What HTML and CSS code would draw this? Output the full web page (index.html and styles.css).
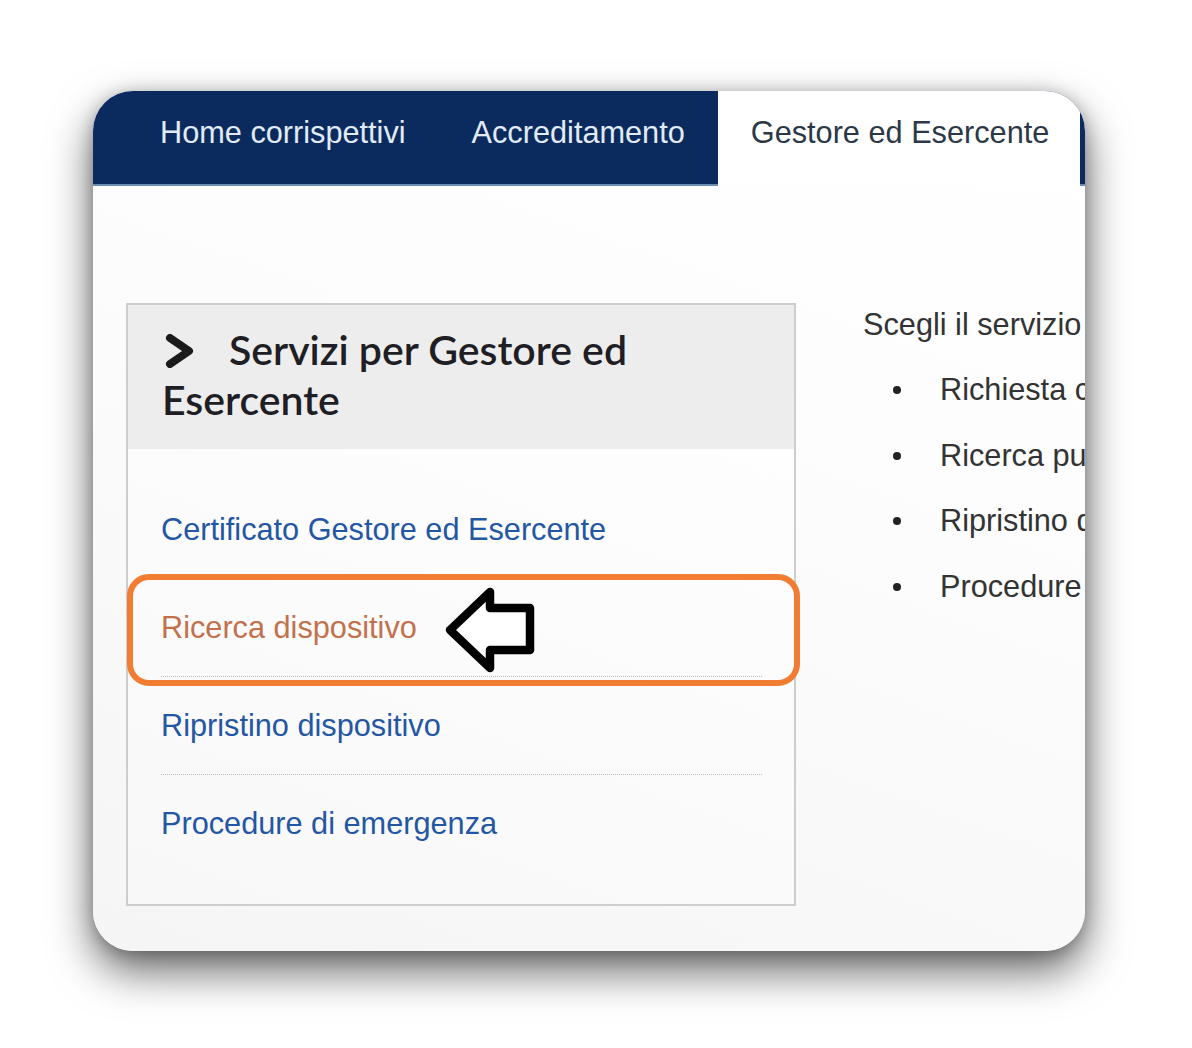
FILE: index.html
```html
<!DOCTYPE html>
<html lang="it">
<head>
<meta charset="utf-8">
<title>Gestore ed Esercente</title>
<link rel="stylesheet" href="styles.css">
</head>
<body>
<div class="stage">
  <div class="card">
    <nav class="nav">
      <a class="tab">Home corrispettivi</a>
      <a class="tab">Accreditamento</a>
      <a class="tab tab-active">Gestore ed Esercente</a>
      <a class="tab">Consultazione</a>
    </nav>
    <div class="content">
      <section class="panel">
        <h2 class="panel-title">
          <svg class="chevron" viewBox="0 0 30 34" aria-hidden="true"><polyline points="5,4 24,17 5,30" fill="none" stroke="#1b1b1b" stroke-width="8" stroke-linecap="round" stroke-linejoin="round"/></svg>Servizi per Gestore ed Esercente
        </h2>
        <ul class="links">
          <li class="link-item"><a class="link">Certificato Gestore ed Esercente</a></li>
          <li class="link-item"><a class="link link-hover">Ricerca dispositivo</a></li>
          <li class="link-item"><a class="link">Ripristino dispositivo</a></li>
          <li class="link-item"><a class="link">Procedure di emergenza</a></li>
        </ul>
        <div class="highlight"></div>
        <svg class="arrow" viewBox="0 0 90 88" aria-hidden="true"><polygon points="5,44 45,6 45,22 85,22 85,64 45,64 45,82" fill="#fff" stroke="#000" stroke-width="8.5" stroke-linejoin="round"/></svg>
      </section>
      <div class="intro">
        <p class="intro-text">Scegli il servizio di interesse</p>
        <ul class="services">
          <li class="service">Richiesta certificato</li>
          <li class="service">Ricerca punto vendita</li>
          <li class="service">Ripristino dispositivo</li>
          <li class="service">Procedure di emergenza</li>
        </ul>
      </div>
    </div>
  </div>
</div>
</body>
</html>
```

FILE: styles.css
```css
* { box-sizing: border-box; }
html, body { margin: 0; padding: 0; background: #fff; }
body { font-family: "Liberation Sans", Arial, sans-serif; }

.stage {
  padding: 91px 0 97px 93px;
  min-height: 1048px;
}

.card {
  width: 992px;
  height: 860px;
  border-radius: 40px;
  overflow: hidden;
  background: linear-gradient(200deg, #ffffff 0%, #fdfdfd 35%, #f5f5f5 100%);
  box-shadow: 0 20px 44px rgba(0, 0, 0, 0.6), 0 2px 16px rgba(0, 0, 0, 0.24);
}

.nav {
  display: flex;
  flex-wrap: nowrap;
  height: 95px;
  padding-left: 34px;
  background: #0b2b5f;
  box-shadow: inset 0 -2px 0 #6b8db2;
  white-space: nowrap;
}

.tab {
  flex-shrink: 0;
  height: 93px;
  padding: 24px 33px 0;
  font-size: 30.7px;
  line-height: 36px;
  color: #e2ebf5;
}

.tab-active {
  height: 95px;
  background: #fff;
  color: #2c3848;
  width: 362px;
}

.content {
  display: flex;
  align-items: flex-start;
  gap: 67px;
  padding: 106px 0 0 33px;
  white-space: nowrap;
}

.panel {
  position: relative;
  flex-shrink: 0;
  width: 670px;
  margin-top: 11px;
  border: 2px solid #cdcdcd;
  background: linear-gradient(200deg, #ffffff 0%, #f8f8f8 100%);
}

.panel-title {
  margin: 0;
  padding: 20px 34px 24px;
  background: #ededed;
  font-family: "Lato", "Liberation Sans", sans-serif;
  font-weight: 600;
  font-size: 41px;
  line-height: 50px;
  color: #1e1e24;
  white-space: normal;
}

.chevron {
  display: inline-block;
  width: 30px;
  height: 34px;
  margin: 0 34px 0 3px;
  vertical-align: -3px;
}

.links {
  list-style: none;
  margin: 0;
  padding: 32px 32px 32px 33px;
}

.link-item {
  height: 98px;
  line-height: 97px;
  border-bottom: 1px dotted #b9b9b9;
}

.link-item:last-child {
  border-bottom: none;
  height: 97px;
}

.link {
  font-size: 30.7px;
  color: #2457a3;
}

.link-hover {
  color: #c2714d;
}

.highlight {
  position: absolute;
  left: -1px;
  top: 269px;
  width: 673px;
  height: 112px;
  border: 6px solid #f07d32;
  border-radius: 22px;
}

.arrow {
  position: absolute;
  left: 317px;
  top: 281px;
  width: 90px;
  height: 88px;
}

.intro {
  flex-shrink: 0;
  color: #333;
  font-size: 30.7px;
}

.intro-text {
  margin: 0;
  line-height: 65.5px;
}

.services {
  list-style: none;
  margin: 0;
  padding: 0;
}

.service {
  display: flex;
  align-items: center;
  height: 65.5px;
}

.service::before {
  content: "";
  width: 8px;
  height: 8px;
  border-radius: 50%;
  background: #222;
  margin: 0 39px 0 30px;
}
```
